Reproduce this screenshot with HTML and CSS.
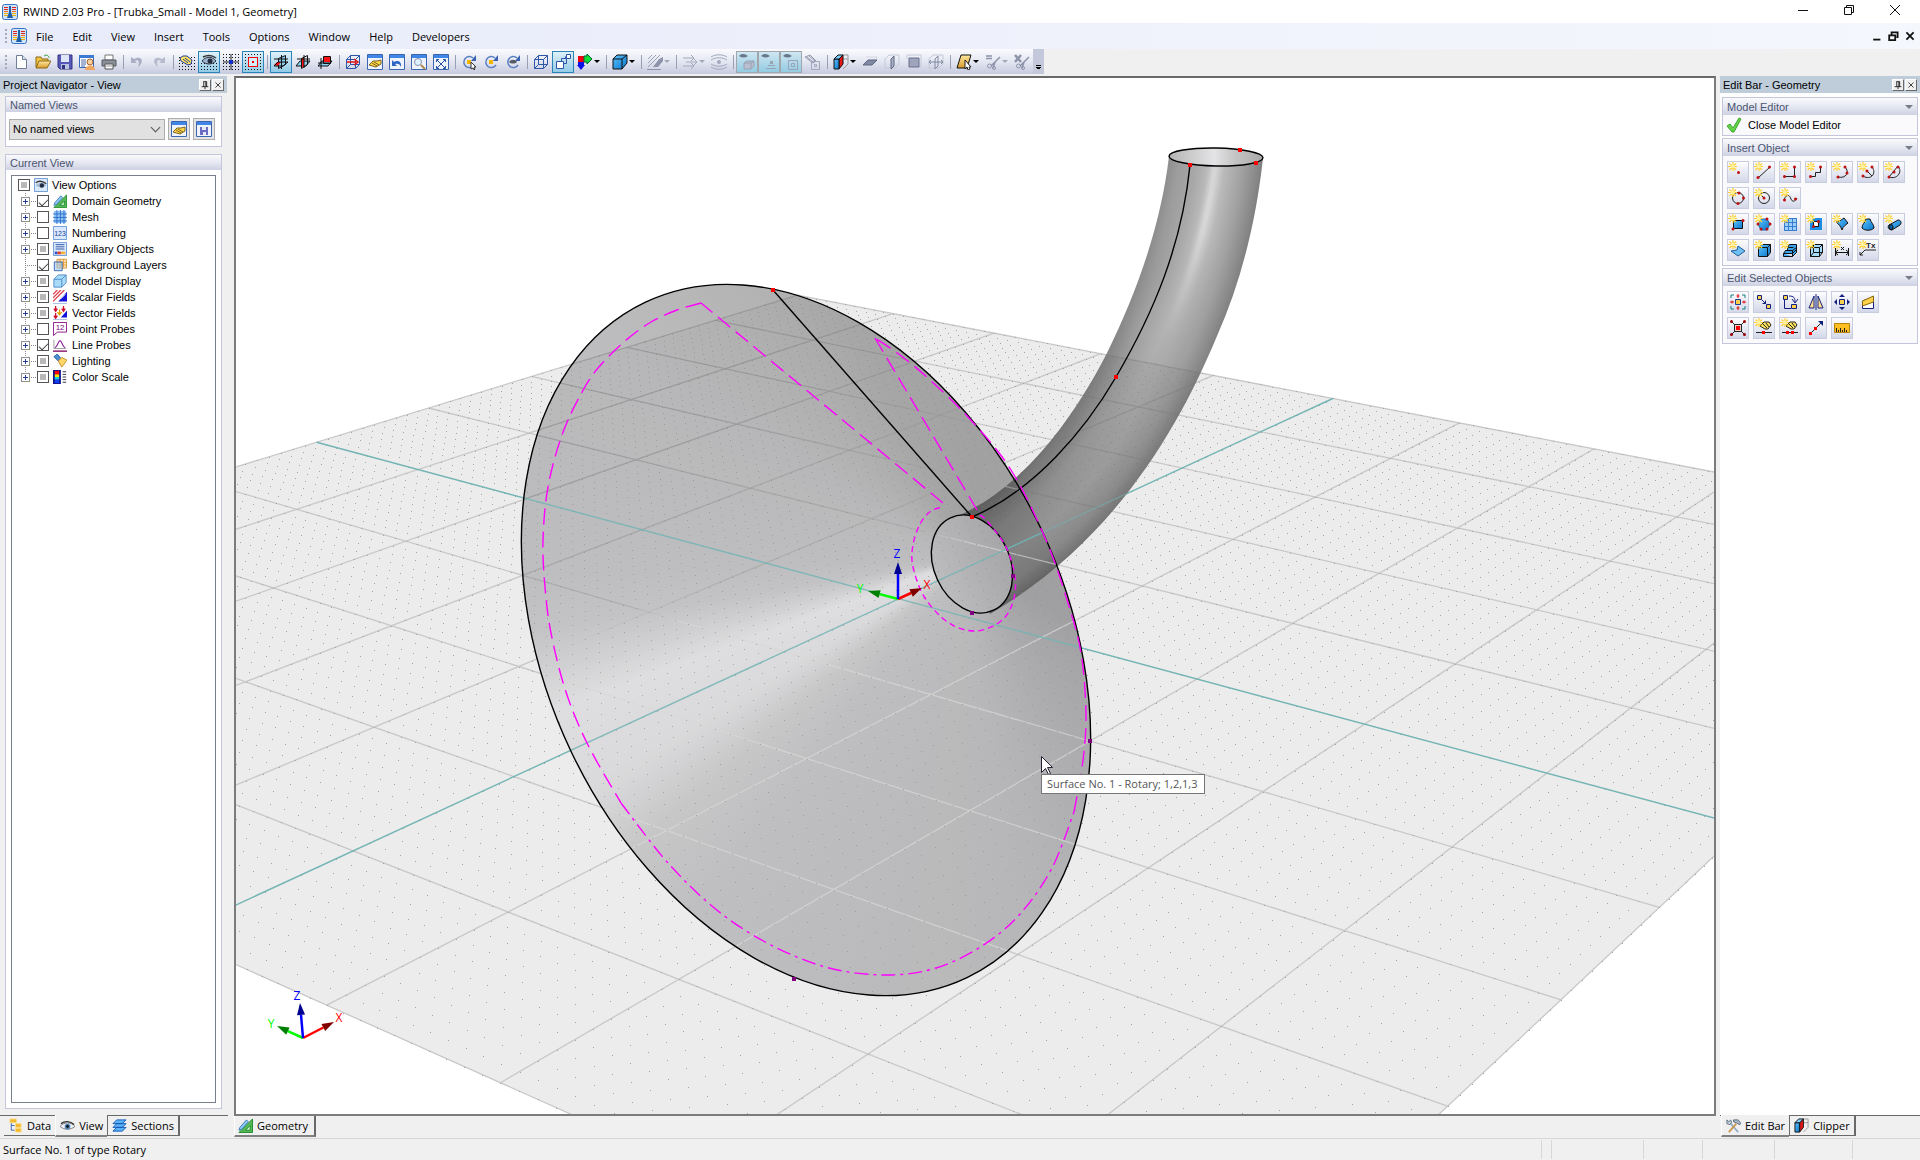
FILE: index.html
```
<!DOCTYPE html>
<html lang="en">
<head>
    <meta charset="UTF-8">
    <meta name="viewport" content="width=device-width, initial-scale=1.0">
    <title>RWIND 2.03 Pro - [Trubka_Small - Model 1, Geometry]</title>
    <link rel="stylesheet" href="styles.css">
</head>
<body>
    <!-- icon set -->
    <svg class="sprite" aria-hidden="true">
        <defs>
            <pattern id="dots" width="3" height="3" patternUnits="userSpaceOnUse"><rect width="1" height="1" fill="#111"/></pattern>
            <linearGradient id="blue" x1="0" y1="0" x2="1" y2="1"><stop offset="0" stop-color="#5cc3ff"/><stop offset="1" stop-color="#0a74c8"/></linearGradient>
            <linearGradient id="gold" x1="0" y1="0" x2="0" y2="1"><stop offset="0" stop-color="#ffe9a0"/><stop offset="1" stop-color="#d99a2b"/></linearGradient>
        </defs>
        <symbol id="i-app" viewBox="0 0 16 16"><rect x=".5" y=".5" width="15" height="15" rx="2" fill="#cfe4fb" stroke="#3573c4"/><path d="M2 3.500h4M2 5.500h4M10 3.500h4M10 5.500h4" stroke="#e02020"/><path d="M2 7.500h4M10 7.500h4" stroke="#f06a20"/><path d="M2 9.500h4M2 11.500h4M10 9.500h4M10 11.500h4" stroke="#f0b000"/><path d="M7 2h2v6l2 6H5l2-6z" fill="#1d5ea8"/></symbol>
        <symbol id="i-new" viewBox="0 0 16 16"><path d="M3.500 1.500h6l4 4v9h-10z" fill="#fff" stroke="#6f7f9a"/><path d="M9.500 1.500v4h4" fill="#dbe4f2" stroke="#6f7f9a"/></symbol>
        <symbol id="i-open" viewBox="0 0 16 16"><path d="M1 13V3h5l1 2h6v3" fill="#f5c343" stroke="#8b6914"/><path d="M1 14l3-7h12l-4 7z" fill="url(#gold)" stroke="#8b6914"/><path d="M9 2c3-2 5 0 5 2" fill="none" stroke="#3aa03a"/></symbol>
        <symbol id="i-save" viewBox="0 0 16 16"><path d="M1 1h14v14H3l-2-2z" fill="#5658b8" stroke="#32347e"/><path d="M4 1h8v7H4z" fill="#dfe6f8"/><path d="M4 10h8v5H4z" fill="#b9c2df"/><path d="M5 11h3v4H5z" fill="#32347e"/></symbol>
        <symbol id="i-props" viewBox="0 0 16 16"><path d="M.5 1.500h14v12H.5z" fill="#fff" stroke="#3c68b8"/><path d="M0 1h15v3H0z" fill="#3c7ad4"/><path d="M2 6h5M2 8h5M2 10h5M2 12h4" stroke="#4a66a8"/><circle cx="11" cy="8" r="3" fill="#f6cfa0" stroke="#a4622c"/><path d="M6 16c0-6 10-6 10 0z" fill="#f0a860"/></symbol>
        <symbol id="i-print" viewBox="0 0 16 16"><path d="M4 1h8v5H4z" fill="#fff" stroke="#777"/><path d="M1 6h14v6H1z" fill="#8a8f98" stroke="#555a63"/><path d="M4 10h8v5H4z" fill="#fff" stroke="#555"/><path d="M5 12h6" stroke="#999"/></symbol>
        <symbol id="i-undo" viewBox="0 0 16 16"><path d="M2 3v6h6L6 7c3-2 5 1 3 6 7-5 4-12-4-8z" fill="#a9aec2"/></symbol>
        <symbol id="i-redo" viewBox="0 0 16 16"><path d="M14 3v6H8l2-2C7 5 5 8 7 13 0 8 3 1 11 5z" fill="#b6bacb"/></symbol>
        <symbol id="i-grab" viewBox="0 0 16 16"><path d="M0 2h16v14H0z" fill="url(#dots)"/><path d="M1 4l3-2h4l5 4-1 4-3 1-7-4z" fill="#ffe45c" stroke="#223a9c"/><path d="M4 5l5 4M6 4l5 4" stroke="#223a9c"/></symbol>
        <symbol id="i-eyegrid" viewBox="0 0 16 16"><path d="M0 8h16v8H0z" fill="url(#dots)"/><path d="M1 7c4-5 10-5 14 0-4 4-10 4-14 0z" fill="#9fb4cf" stroke="#2b3340"/><circle cx="9" cy="7" r="2.500" fill="#222b3a"/><path d="M2 3c4-2 9-2 13 1" fill="none" stroke="#333" stroke-width="1.500"/></symbol>
        <symbol id="i-cross" viewBox="0 0 16 16"><path d="M0 0h16v16H0z" fill="url(#dots)"/><path d="M8 0v16M0 8h16" stroke="#222"/><circle cx="8" cy="8" r="2" fill="#0a2ae0"/></symbol>
        <symbol id="i-snap" viewBox="0 0 16 16"><path d="M0 0h16v16H0z" fill="url(#dots)"/><path d="M3.500 3.500h9v9h-9z" fill="#d5effa" stroke="#f00"/><path d="M7 7h2v2H7z" fill="#f00"/></symbol>
        <symbol id="i-plane1" viewBox="0 0 16 16"><path d="M5.500 4.500l7-3v9l-7 4z" fill="#8ed0f0" stroke="#111"/><path d="M1 11l3-3h4l-3 4z" fill="#f11"/><path d="M1 12l4-4h10M1 12h9l5-4M1 5h14M8.500 1v14" fill="none" stroke="#111"/></symbol>
        <symbol id="i-plane2" viewBox="0 0 16 16"><path d="M1 12l4-5h10l-4 5z" fill="#8ed0f0" stroke="#111"/><path d="M6 5l3-2v9l-3 2z" fill="#f11"/><path d="M6.500 4.500l6-3v9l-6 4zM2 5h13M9 1v13" fill="none" stroke="#111"/></symbol>
        <symbol id="i-plane3" viewBox="0 0 16 16"><path d="M1 12l4-5h10l-4 5z" fill="#8ed0f0" stroke="#111"/><path d="M7 2h6v6H7z" fill="#f11"/><path d="M6.500 2.500h7v7h-7zM4 4v11M1 9h13" fill="none" stroke="#111"/></symbol>
        <symbol id="i-wire" viewBox="0 0 16 16"><path d="M1.500 5.500h9v9h-9zM5.500 1.500h9v9h-9zM1.500 5.500l4-4M10.500 5.500l4-4M1.500 14.500l4-4M10.500 14.500l4-4" fill="none" stroke="#2d55a8"/></symbol>
        <symbol id="i-wirex" viewBox="0 0 16 16"><use href="#i-wire"/><path d="M2 8h9M9 5l4 3-4 3" fill="none" stroke="#e01010" stroke-width="1.500"/></symbol>
        <symbol id="i-win" viewBox="0 0 16 16"><path d="M.5.5h15v15H.5z" fill="#eef3fc" stroke="#3d66b0"/><path d="M1 1h14v3H1z" fill="#3f86e6"/></symbol>
        <symbol id="i-winhand" viewBox="0 0 16 16"><use href="#i-win"/><path d="M2 11l4-4 4 0 4-1v4l-5 3z" fill="#ffd84a" stroke="#7b6320"/><path d="M5 9l5 3M7 8l5 3" stroke="#7b6320"/></symbol>
        <symbol id="i-winback" viewBox="0 0 16 16"><use href="#i-win"/><path d="M3 6v6h5l-2-2c3-1 5 0 6 3 1-6-4-7-7-5z" fill="#2e66c4"/></symbol>
        <symbol id="i-winzoom" viewBox="0 0 16 16"><use href="#i-win"/><circle cx="7" cy="8" r="3.500" fill="#dff1ff" stroke="#8793a8"/><path d="M10 11l4 4" stroke="#b08a4a" stroke-width="2"/></symbol>
        <symbol id="i-winfit" viewBox="0 0 16 16"><use href="#i-win"/><path d="M4 6l8 8M12 6l-8 8M3.500 8V5.500H6M10 5.500h2.500V8M3.500 12v2.500H6M10 14.500h2.500V12" fill="none" stroke="#2a52a4"/></symbol>
        <symbol id="i-rot" viewBox="0 0 16 16"><path d="M12 4a5.500 5.500 0 1 0 1 7" fill="none" stroke="#5a7fc0" stroke-width="1.500"/><path d="M15 1v6H10z" fill="#3a62b0"/></symbol>
        <symbol id="i-rot1" viewBox="0 0 16 16"><use href="#i-rot"/><path d="M6 6h4v4H6z" fill="#f5b400"/><path d="M10 8v7l2-1 1 2 1-1-1-2h2z" fill="#fff" stroke="#333"/></symbol>
        <symbol id="i-rot2" viewBox="0 0 16 16"><use href="#i-rot"/><path d="M6 6h4v4H6z" fill="#f5b400"/></symbol>
        <symbol id="i-rot3" viewBox="0 0 16 16"><use href="#i-rot"/><path d="M4 8c2-3 6-3 8 0-2 2-6 2-8 0z" fill="#555c68"/></symbol>
        <symbol id="i-persp" viewBox="0 0 16 16"><path d="M1.500 7.500h7v7h-7z" fill="#fff" stroke="#2d55a8"/><path d="M6.500 7V4.500h5v5H9M10.500 4V2.500" fill="none" stroke="#2d55a8"/><path d="M11.500.5h4v4h-4z" fill="#fff" stroke="#2d55a8"/></symbol>
        <symbol id="i-view3" viewBox="0 0 16 16"><path d="M1 2h6v6H1z" fill="#f00010"/><path d="M7 2h3V0l5 5-5 5V8H7z" fill="#0ee03a" stroke="#063"/><path d="M1 8h6v3h1l-4 5-4-5h1z" fill="#0a10e8"/></symbol>
        <symbol id="i-cube" viewBox="0 0 16 16"><path d="M1 5l4-4h10v8l-5 6H1z" fill="url(#blue)" stroke="#111" stroke-linejoin="round"/><path d="M1 5h9v10M10 5l5-4" fill="none" stroke="#111"/></symbol>
        <symbol id="i-hatch" viewBox="0 0 16 16"><path d="M1 5l4-4M1 9l8-8M1 13L13 1" stroke="#9aa0b4"/><path d="M6 13l6-8 4-2v4l-5 6z" fill="#8d94aa"/><path d="M0 15.500h14" stroke="#8d94aa"/></symbol>
        <symbol id="i-arrows" viewBox="0 0 16 16"><path d="M1 4h10M1 12h10M4 8h10M9 1l3 3-3 3M12 5l3 3-3 3M9 9l3 3-3 3" fill="none" stroke="#a2a8bc"/></symbol>
        <symbol id="i-flow" viewBox="0 0 16 16"><path d="M0 3c5-3 11-3 16 0M0 6c5-3 11-3 16 0M0 13c5 3 11 3 16 0M0 10c5 3 11 3 16 0" fill="none" stroke="#a2a8bc"/><circle cx="8" cy="8" r="2" fill="#a2a8bc"/></symbol>
        <symbol id="i-ebox" viewBox="0 0 16 16"><path d="M0 2c3-3 6-2 9 0-3 2-6 2-9 0z" fill="#68788c"/><path d="M5 9l3-2h7v5l-3 3H5zM5 9h7v6M12 9l3-2" fill="#b9bfce" stroke="#9aa2b6"/></symbol>
        <symbol id="i-ebase" viewBox="0 0 16 16"><path d="M0 2c3-3 6-2 9 0-3 2-6 2-9 0z" fill="#68788c"/><path d="M9 7h3v3H9zM7 11h7v1H7zM5 14h10v1H5z" fill="#9aa2b6"/></symbol>
        <symbol id="i-esq" viewBox="0 0 16 16"><path d="M0 2c3-3 6-2 9 0-3 2-6 2-9 0z" fill="#68788c"/><path d="M5.500 6.500h9v9h-9zM8.500 9.500h3v3h-3z" fill="none" stroke="#9aa2b6"/></symbol>
        <symbol id="i-handsq" viewBox="0 0 16 16"><path d="M0 3l5-2 6 6-3 2zM2 3l6 5M4 2l6 5" fill="none" stroke="#9298ac"/><path d="M6.500 7.500h8v8h-8zM9.500 10.500h2v2h-2z" fill="none" stroke="#a2a8bc"/></symbol>
        <symbol id="i-clip" viewBox="0 0 16 16"><path d="M6 5l3-4h6v9l-5 5M10 5h5" fill="none" stroke="#999"/><path d="M6 5l4-4v9l-4 5z" fill="#e81616" stroke="#111"/><path d="M1 5h5v10H1z" fill="url(#blue)" stroke="#111"/><path d="M1 5l4-4h5L6 5z" fill="#7bd0ff" stroke="#111"/></symbol>
        <symbol id="i-cl1" viewBox="0 0 16 16"><path d="M4 3h11L11 14" fill="none" stroke="#d4d8e4"/><path d="M1 11l5-5h9l-5 5z" fill="#8188a2" stroke="#5f6682"/></symbol>
        <symbol id="i-cl2" viewBox="0 0 16 16"><path d="M1 5l4-4h10v9l-4 4H1z" fill="none" stroke="#c4c9d8"/><path d="M7 5l3-3v10l-3 3z" fill="#aab0c6" stroke="#5f6682"/></symbol>
        <symbol id="i-cl3" viewBox="0 0 16 16"><path d="M1 5V1h14v12h-3" fill="none" stroke="#c4c9d8"/><path d="M3 4h10v9H3z" fill="#9da4bc" stroke="#6a7190"/></symbol>
        <symbol id="i-cl4" viewBox="0 0 16 16"><path d="M1 5l4-4h10v9l-4 4H1z" fill="none" stroke="#c4c9d8"/><path d="M7 5l3-3v10l-3 3zM1 8h14M3 6L1 8l2 2M13 6l2 2-2 2" fill="none" stroke="#8188a2"/></symbol>
        <symbol id="i-slice" viewBox="0 0 16 16"><path d="M1 14L5 1h10l-4 13z" fill="url(#gold)" stroke="#111"/><path d="M9 6v9l2-2 1 3 2-1-1-2h2z" fill="#fff" stroke="#222"/></symbol>
        <symbol id="i-cut" viewBox="0 0 16 16"><path d="M1 2h6M1 4.500h6" stroke="#8d94aa" stroke-width="1.500"/><path d="M6 12l9-9M10 8l-2 6" stroke="#8d94aa" stroke-width="1.500"/><circle cx="4.500" cy="12" r="2" fill="none" stroke="#8d94aa"/><circle cx="9" cy="14" r="1.500" fill="none" stroke="#8d94aa"/></symbol>
        <symbol id="i-cutx" viewBox="0 0 16 16"><path d="M1 1l6 7M7 1L1 8" stroke="#8d94aa" stroke-width="2.500"/><path d="M6 12l9-9M10 8l-2 6" stroke="#8d94aa" stroke-width="1.500"/><circle cx="4.500" cy="12" r="2" fill="none" stroke="#8d94aa"/><circle cx="9" cy="14" r="1.500" fill="none" stroke="#8d94aa"/></symbol>
        <symbol id="i-viewsave" viewBox="0 0 16 16"><use href="#i-win"/><path d="M4 6h8v8H4z" fill="#6a6cc4"/><path d="M6 6h4v3H6zM7 11h3v3H7z" fill="#e4e9f8"/></symbol>

        <symbol id="t-eye" viewBox="0 0 16 16"><path d="M.5.5h15v15H.5z" fill="#d9e9fb" stroke="#5d8fd0"/><path d="M2 8.500c4-4 8-4 12 0-4 3-8 3-12 0z" fill="#a5b8d0"/><circle cx="9" cy="8.500" r="2.500" fill="#222c40"/><path d="M2 5.500c4-3 8-2 12 1" fill="none" stroke="#333" stroke-width="1.500"/></symbol>
        <symbol id="t-geo" viewBox="0 0 16 16"><path d="M1 15.500L15.500 1v14.500z" fill="#55b855" stroke="#1d8a2c"/><path d="M8 13l5-5v5z" fill="#d8f3d8" stroke="#1d8a2c"/><path d="M2 10l7-8 2 2-7 8-3 1z" fill="#8ccbf5" stroke="#3a78b4"/></symbol>
        <symbol id="t-mesh" viewBox="0 0 16 16"><path d="M1 1h14v14H1z" fill="#8cc4fa"/><path d="M4.500 0v16M8.500 0v16M12.500 0v16M0 4.500h16M0 8.500h16M0 12.500h16" stroke="#2e6cc4"/></symbol>
        <symbol id="t-aux" viewBox="0 0 16 16"><path d="M.5.5h15v15H.5z" fill="#d9e9fb" stroke="#5d8fd0"/><path d="M3 3h10M3 5.500h10M3 8h10" stroke="#24479c"/><path d="M2 11h3v3H2z" fill="#2a50d0"/><path d="M5 11h4v3H5z" fill="#e03a2c"/><path d="M9 11h5v3H9z" fill="#f4b23c"/></symbol>
        <symbol id="t-back" viewBox="0 0 16 16"><path d="M4.500 1.500h11v10h-11z" fill="#ffe3b0" stroke="#d09030"/><path d="M8 1v10M12 1v10M4 5h11M4 8h11" stroke="#e09a3c"/><path d="M1.500 4.500h9v10h-9z" fill="#9cc8f2" fill-opacity=".6" stroke="#2c5fb0"/></symbol>
        <symbol id="t-model" viewBox="0 0 16 16"><path d="M1 6l5-5h9v9l-5 5H1zM1 6h9v9M10 6l5-5" fill="#a8dcfa" stroke="#4a86c4"/></symbol>
        <symbol id="t-scalar" viewBox="0 0 16 16"><path d="M0 5l5-5M0 9l9-9M0 13L13 0" stroke="#e04050" stroke-width="1.500"/><path d="M6 13L16 2v11z" fill="#1414d8"/><path d="M9 10l5-5" stroke="#fff"/><path d="M0 15.500h16" stroke="#9cb6e0"/></symbol>
        <symbol id="t-vector" viewBox="0 0 16 16"><path d="M3 0v5M1 3l2 3 2-3M12 0v5M10 3l2 3 2-3M3 8v5M1 11l2 3 2-3" fill="none" stroke="#d01030" stroke-width="1.500"/><path d="M7.500 4v5M5 7l2.500 3L10 7" fill="none" stroke="#e0a000" stroke-width="1.500"/><path d="M9 13l7-8v8z" fill="#1414d8"/><path d="M0 15.500h16" stroke="#9cb6e0"/></symbol>
        <symbol id="t-line" viewBox="0 0 16 16"><path d="M1 2v10h14" fill="none" stroke="#999"/><path d="M2 11c3 0 4-8 6-8s3 8 6 8" fill="none" stroke="#8a2a9a" stroke-width="1.300"/><path d="M0 15h16" stroke="#800060" stroke-width="1.500"/></symbol>
        <symbol id="t-light" viewBox="0 0 16 16"><path d="M1 3l4-3 4 5-3 3z" fill="#4a8ed0" stroke="#2c5f9c"/><path d="M6 8l4-4 6 3-6 8z" fill="#ffd66a" stroke="#c08a20"/></symbol>
        <symbol id="t-color" viewBox="0 0 16 16"><path d="M0 0h9v16H0z" fill="#111188"/><path d="M2 1h5v4H2z" fill="#f00"/><path d="M2 5h5v3H2z" fill="#ffe000"/><path d="M2 8h5v3H2z" fill="#10d8d8"/><path d="M2 11h5v4H2z" fill="#1040f0"/><path d="M11 2h4M11 5h4M11 8h4M11 11h4M11 14h4" stroke="#223"/></symbol>
        <symbol id="t-data" viewBox="0 0 16 16"><path d="M3.500 5v8H7M3.500 8H7" fill="none" stroke="#3a62b0"/><path d="M2 1h7v4H2zM8 6h6v4H8zM8 11h6v4H8z" fill="#f4b82a" stroke="#f9dc8c"/></symbol>
        <symbol id="t-look" viewBox="0 0 16 16"><path d="M0 9c4-5 12-5 16 0-5 4-11 4-16 0z" fill="#eef2f8" stroke="#777"/><circle cx="8" cy="9" r="3" fill="#4c82b4"/><circle cx="8" cy="9" r="1.500" fill="#111"/><path d="M1 6c4-3 10-3 14 1" fill="none" stroke="#333" stroke-width="1.500"/></symbol>
        <symbol id="t-sect" viewBox="0 0 16 16"><path d="M1 14l4-4h10l-4 4zM1 10l4-4h10l-4 4zM1 6l4-4h10l-4 4z" fill="#5cb4f8" stroke="#1458b8"/></symbol>
        <symbol id="t-tools" viewBox="0 0 16 16"><path d="M4 5l9 10" stroke="#9ab0c8" stroke-width="2"/><path d="M11 6l-8 9" stroke="#c89850" stroke-width="2"/><path d="M8 2h5l3 4-2 1-3-2-3-1z" fill="#aab8c8" stroke="#5d6d80"/><path d="M1 2l2 2 2-2 1 3-2 2-3-1z" fill="#c4d0de" stroke="#5d6d80"/></symbol>
        <symbol id="i-check" viewBox="0 0 16 16"><path d="M1 9l3-2 3 4 6-10 2 1-7 13H6z" fill="#66d24a" stroke="#3ba52c"/></symbol>

        <symbol id="spark" viewBox="0 0 20 20"><path d="M5 0v9M0 4.500h9M1.500 1.500l6.500 6.500M8 1.500L1.500 8" stroke="#ffcf30" stroke-width="1.200"/><circle cx="4.800" cy="4.500" r="2" fill="#fff3a0"/></symbol>
        <symbol id="e-pt" viewBox="0 0 20 20"><use href="#spark"/><circle cx="10.500" cy="10.500" r="1.500" fill="#c01010"/></symbol>
        <symbol id="e-ln" viewBox="0 0 20 20"><path d="M4 16L16 5" stroke="#222"/><use href="#spark"/><g fill="#c01010"><circle cx="4" cy="15.500" r="1.500"/><circle cx="15.500" cy="5" r="1.500"/></g></symbol>
        <symbol id="e-pl" viewBox="0 0 20 20"><path d="M5 14.500h9.500V5" fill="none" stroke="#222"/><use href="#spark"/><g fill="#c01010"><circle cx="4.500" cy="14.500" r="1.500"/><circle cx="14.500" cy="14.500" r="1.500"/><circle cx="14.500" cy="5" r="1.500"/></g></symbol>
        <symbol id="e-st" viewBox="0 0 20 20"><path d="M4 14.500h5.500V10.500h5V5" fill="none" stroke="#222"/><use href="#spark"/><g fill="#c01010"><circle cx="4.500" cy="14.500" r="1.500"/><circle cx="14.500" cy="5" r="1.500"/></g></symbol>
        <symbol id="e-a1" viewBox="0 0 20 20"><path d="M13 5c5 5 1 12-7 10" fill="none" stroke="#222"/><use href="#spark"/><g fill="#c01010"><circle cx="13" cy="5" r="1.500"/><circle cx="15" cy="11" r="1.500"/><circle cx="6" cy="15" r="1.500"/></g></symbol>
        <symbol id="e-a2" viewBox="0 0 20 20"><path d="M14 5c5 6-1 14-9 9M9 9l5 5" fill="none" stroke="#222"/><use href="#spark"/><g fill="#c01010"><circle cx="14" cy="5" r="1.500"/><circle cx="9" cy="9" r="1.500"/><circle cx="5" cy="14" r="1.500"/></g></symbol>
        <symbol id="e-a3" viewBox="0 0 20 20"><path d="M14 4c5 6-1 14-9 11L14 4" fill="none" stroke="#222"/><use href="#spark"/><g fill="#c01010"><circle cx="14" cy="5" r="1.500"/><circle cx="10" cy="10" r="1.500"/><circle cx="5" cy="15" r="1.500"/></g></symbol>
        <symbol id="e-c1" viewBox="0 0 20 20"><circle cx="10" cy="10" r="5.500" fill="none" stroke="#222"/><use href="#spark"/><g fill="#c01010"><circle cx="10" cy="15.500" r="1.500"/><circle cx="15.500" cy="10" r="1.500"/><circle cx="11" cy="5" r="1.500"/></g></symbol>
        <symbol id="e-c2" viewBox="0 0 20 20"><circle cx="10" cy="10" r="5.500" fill="none" stroke="#222"/><path d="M7 7l3 3" stroke="#222"/><use href="#spark"/><circle cx="10" cy="10" r="1.500" fill="#c01010"/></symbol>
        <symbol id="e-sp" viewBox="0 0 20 20"><path d="M4 12c3-8 6-4 7-1s4 3 6-1" fill="none" stroke="#222"/><use href="#spark"/><g fill="#c01010"><circle cx="4.500" cy="12" r="1.500"/><circle cx="15.500" cy="11" r="1.500"/></g></symbol>
        <symbol id="e-rc" viewBox="0 0 20 20"><path d="M5.500 6.500h9v8h-9z" fill="url(#blue)" stroke="#111"/><use href="#spark"/><g fill="#c01010"><circle cx="15" cy="6.500" r="1.500"/><circle cx="5" cy="15" r="1.500"/></g></symbol>
        <symbol id="e-pg" viewBox="0 0 20 20"><path d="M7 5h6l3 5-3 6H7l-3-6z" fill="url(#blue)" stroke="#1569ac"/><use href="#spark"/><g fill="#c01010"><circle cx="13" cy="5" r="1.500"/><circle cx="16" cy="10" r="1.500"/><circle cx="13" cy="15" r="1.500"/><circle cx="7" cy="15" r="1.500"/><circle cx="4" cy="10" r="1.500"/></g></symbol>
        <symbol id="e-gr" viewBox="0 0 20 20"><path d="M4 4h12v12H4z" fill="#9bd0fa"/><path d="M4.500 4v12M8.500 4v12M12.500 4v12M16.500 4v13M4 4.500h12M4 8.500h12M4 12.500h12M4 16.500h12" stroke="#3a7cd0"/><use href="#spark"/></symbol>
        <symbol id="e-op" viewBox="0 0 20 20"><path d="M4 4h12v12H4z" fill="#1a8de4"/><path d="M7.500 7.500h5v5h-5z" fill="#fff" stroke="#111"/><use href="#spark"/><g fill="#c01010"><circle cx="12.500" cy="7.500" r="1.500"/><circle cx="7.500" cy="12.500" r="1.500"/></g></symbol>
        <symbol id="e-q1" viewBox="0 0 20 20"><path d="M4 8c4 0 6-3 8-4l4 5c-2 2-5 3-6 7-1-3-3-6-6-8z" fill="url(#blue)" stroke="#111"/><use href="#spark"/></symbol>
        <symbol id="e-ro" viewBox="0 0 20 20"><path d="M8 5h4c1 4 4 5 4 9-3 3-9 3-12 0 0-4 3-5 4-9z" fill="url(#blue)" stroke="#111"/><use href="#spark"/></symbol>
        <symbol id="e-pp" viewBox="0 0 20 20"><path d="M5 11l9-5c3 0 4 3 2 5l-8 5c-3 0-5-3-3-5z" fill="url(#blue)" stroke="#111"/><ellipse cx="7" cy="13" rx="2" ry="2.500" fill="#0a5a9c" stroke="#111"/><use href="#spark"/></symbol>
        <symbol id="e-su" viewBox="0 0 20 20"><path d="M3 11l6-1 1-4 7 5-7 5z" fill="#6fc0f5" stroke="#1f5f94"/><use href="#spark"/></symbol>
        <symbol id="e-bx" viewBox="0 0 20 20"><path d="M4.500 7.500l3-3h9v8l-3 4h-9zM4.500 7.500h9v9M13.500 7.500l3-3" fill="url(#blue)" stroke="#111"/><use href="#spark"/></symbol>
        <symbol id="e-ex" viewBox="0 0 20 20"><path d="M3.500 13.500h9v3h-9zM12.500 16.500l4-4v-8h-7l-2 3v3l-2 0-2 3" fill="#3aa4ee" stroke="#111"/><path d="M5.500 10.500h7M7.500 7.500h6M12.500 13.500l4-4M12.500 10.500l4-3M12.500 13v-3" fill="none" stroke="#111"/><use href="#spark"/></symbol>
        <symbol id="e-bh" viewBox="0 0 20 20"><path d="M4.500 7.500l3-3h9v8l-3 4h-9z" fill="#a8dcfc" stroke="#111"/><path d="M4.500 7.500h9v9M13.500 7.500l3-3M7.500 4.500v8h9M7.500 12.500l-3 4" fill="none" stroke="#111"/><use href="#spark"/></symbol>
        <symbol id="e-dm" viewBox="0 0 20 20"><path d="M3.500 8v8M16.500 8v8M3 12.500h14M6 10l-3 2.500 3 2.500M14 10l3 2.500-3 2.500" fill="none" stroke="#111"/><path d="M9 7l3 3M12 7l-3 3" stroke="#111"/><use href="#spark"/></symbol>
        <symbol id="e-sel" viewBox="0 0 20 20"><path d="M7.500 7.500h5v5h-5z" fill="#ffd04a" stroke="#223a9c"/><path d="M10 2v4M10 14v4M2 10h4M14 10h4M8.500 4h3M8.500 16h3M4 8.500v3M16 8.500v3" stroke="#e01010"/><path d="M3 6V3h3M14 3h3v3M3 14v3h3M14 17h3v-3" fill="none" stroke="#128080"/></symbol>
        <symbol id="e-cp" viewBox="0 0 20 20"><path d="M3.500 3.500h4v4h-4zM12.500 12.500h4v4h-4z" fill="#ffd04a" stroke="#14207c"/><path d="M8 8l4 4M8.500 11.500h3v-3" fill="none" stroke="#14207c"/></symbol>
        <symbol id="e-rt" viewBox="0 0 20 20"><path d="M3.500 3.500h4v4h-4zM11.500 12.500h5v4h-5z" fill="#ffd04a" stroke="#14207c"/><path d="M4.500 8v8.500H11M9 4c5 0 6 2 6 6M12 7l3 4 3-4" fill="none" stroke="#14207c"/></symbol>
        <symbol id="e-mr" viewBox="0 0 20 20"><path d="M8 4v12H3zM12 4v12h5z" fill="#ffe08a" stroke="#14207c"/><path d="M10 2v16" stroke="#14207c"/></symbol>
        <symbol id="e-mv" viewBox="0 0 20 20"><path d="M7.500 7.500h5v5h-5z" fill="#ffd04a" stroke="#14207c"/><path d="M10 2l3 3H7zM10 18l3-3H7zM2 10l3-3v6zM18 10l-3-3v6z" fill="#14207c"/></symbol>
        <symbol id="e-sh" viewBox="0 0 20 20"><path d="M4.500 16.500V9l11-4v11.500z" fill="#fff" stroke="#14207c"/><path d="M4.500 14V9l11-5v6z" fill="#ffd04a" stroke="#8a6a10"/></symbol>
        <symbol id="e-jn" viewBox="0 0 20 20"><path d="M3 3l14 14M17 3L3 17" stroke="#222"/><path d="M6.500 6.500h7v7h-7z" fill="#f6d0c8" stroke="#222"/><path d="M8 8h4v4H8z" fill="#f00"/><g fill="#900"><circle cx="3.500" cy="3.500" r="1.500"/><circle cx="16.500" cy="3.500" r="1.500"/><circle cx="3.500" cy="16.500" r="1.500"/><circle cx="16.500" cy="16.500" r="1.500"/></g></symbol>
        <symbol id="e-d1" viewBox="0 0 20 20"><path d="M2 14.500h16" stroke="#222"/><path d="M8 13h3v3H8z" fill="#f00"/><path d="M6 8l4-4h5l2 3-3 4h-3z" fill="#ffe45c" stroke="#222"/><path d="M9 6l4 4M12 5l3 4" stroke="#222"/><use href="#spark"/></symbol>
        <symbol id="e-d2" viewBox="0 0 20 20"><path d="M2 14.500h16" stroke="#222"/><path d="M6 13h3v3H6zM11 13h3v3h-3z" fill="#f00"/><path d="M6 8l4-4h5l2 3-3 4h-3z" fill="#ffe45c" stroke="#222"/><path d="M9 6l4 4M12 5l3 4" stroke="#222"/><use href="#spark"/></symbol>
        <symbol id="e-xt" viewBox="0 0 20 20"><path d="M4 16L15 5" stroke="#222"/><path d="M3 14h3v3H3zM8 9h3v3H8z" fill="#f00"/><path d="M12 3h5v5z" fill="#14207c"/></symbol>
        <symbol id="e-ms" viewBox="0 0 20 20"><path d="M2.500 5.500h15v9h-15z" fill="#ffbe20" stroke="#b88410"/><path d="M4.500 14v-4M6.500 14v-2M8.500 14v-4M10.500 14v-2M12.500 14v-4M14.500 14v-2" stroke="#222"/></symbol>
        <symbol id="i-pin" viewBox="0 0 12 12"><path d="M2 8h8M4 2h4M4.500 2v6M7 2v6M8 2v6M6 8v3" stroke="#111" fill="none"/></symbol>
        <symbol id="i-x" viewBox="0 0 12 12"><path d="M3 3l6 6M9 3L3 9" stroke="#222"/></symbol>
    </svg>

    <header class="titlebar">
        <svg class="icon"><use href="#i-app"/></svg>
        <h1>RWIND 2.03 Pro - [Trubka_Small - Model 1, Geometry]</h1>
        <div class="window-buttons">
            <button aria-label="Minimize"><svg viewBox="0 0 12 12"><path d="M1 6.500h10"/></svg></button>
            <button aria-label="Restore"><svg viewBox="0 0 12 12"><path d="M1.500 3.500h7v7h-7zM3.500 3V1.500h7v7H9"/></svg></button>
            <button aria-label="Close"><svg viewBox="0 0 12 12"><path d="M1 1l10 10M11 1L1 11"/></svg></button>
        </div>
    </header>

    <nav class="menubar">
        <span class="grip"></span>
        <svg class="icon"><use href="#i-app"/></svg>
        <button>File</button>
        <button>Edit</button>
        <button>View</button>
        <button>Insert</button>
        <button>Tools</button>
        <button>Options</button>
        <button>Window</button>
        <button>Help</button>
        <button>Developers</button>
        <div class="child-buttons">
            <button aria-label="Minimize document"><svg viewBox="0 0 10 10"><path d="M1 8h6"/></svg></button>
            <button aria-label="Restore document"><svg viewBox="0 0 10 10"><path d="M1 4.500h5v4H1zM3 4V2h5v4H7"/></svg></button>
            <button aria-label="Close document"><svg viewBox="0 0 10 10"><path d="M2 2l6 6M8 2L2 8"/></svg></button>
        </div>
    </nav>

    <div class="toolbar" role="toolbar">
        <span class="grip"></span>
        <button class="tool" aria-label="New"><svg><use href="#i-new"/></svg></button>
        <button class="tool" aria-label="Open"><svg><use href="#i-open"/></svg></button>
        <button class="tool" aria-label="Save"><svg><use href="#i-save"/></svg></button>
        <button class="tool" aria-label="Properties"><svg><use href="#i-props"/></svg></button>
        <button class="tool" aria-label="Print"><svg><use href="#i-print"/></svg></button>
        <span class="sep"></span>
        <button class="tool" aria-label="Undo"><svg><use href="#i-undo"/></svg></button>
        <button class="tool" aria-label="Redo"><svg><use href="#i-redo"/></svg></button>
        <span class="sep"></span>
        <button class="tool" aria-label="Edit work plane"><svg><use href="#i-grab"/></svg></button>
        <button class="tool active" aria-label="Show grid"><svg><use href="#i-eyegrid"/></svg></button>
        <button class="tool" aria-label="Ortho"><svg><use href="#i-cross"/></svg></button>
        <button class="tool active" aria-label="Snap"><svg><use href="#i-snap"/></svg></button>
        <span class="sep"></span>
        <button class="tool active" aria-label="Plane XY"><svg><use href="#i-plane1"/></svg></button>
        <button class="tool" aria-label="Plane YZ"><svg><use href="#i-plane2"/></svg></button>
        <button class="tool" aria-label="Plane XZ"><svg><use href="#i-plane3"/></svg></button>
        <span class="sep"></span>
        <button class="tool" aria-label="View direction"><svg><use href="#i-wirex"/></svg></button>
        <button class="tool" aria-label="Pan"><svg><use href="#i-winhand"/></svg></button>
        <button class="tool" aria-label="Previous view"><svg><use href="#i-winback"/></svg></button>
        <button class="tool" aria-label="Zoom window"><svg><use href="#i-winzoom"/></svg></button>
        <button class="tool" aria-label="Show all"><svg><use href="#i-winfit"/></svg></button>
        <span class="sep"></span>
        <button class="tool" aria-label="Rotate about point"><svg><use href="#i-rot1"/></svg></button>
        <button class="tool" aria-label="Rotate about center"><svg><use href="#i-rot2"/></svg></button>
        <button class="tool" aria-label="Rotate view"><svg><use href="#i-rot3"/></svg></button>
        <span class="sep"></span>
        <button class="tool" aria-label="Wireframe"><svg><use href="#i-wire"/></svg></button>
        <button class="tool active" aria-label="Perspective"><svg><use href="#i-persp"/></svg></button>
        <button class="tool drop" aria-label="Views"><svg><use href="#i-view3"/></svg></button>
        <span class="sep"></span>
        <button class="tool drop" aria-label="Display style"><svg><use href="#i-cube"/></svg></button>
        <span class="sep"></span>
        <button class="tool drop off" aria-label="Scalar fields"><svg><use href="#i-hatch"/></svg></button>
        <span class="sep"></span>
        <button class="tool drop off" aria-label="Vector fields"><svg><use href="#i-arrows"/></svg></button>
        <button class="tool" aria-label="Streamlines"><svg><use href="#i-flow"/></svg></button>
        <span class="sep"></span>
        <button class="tool active-off" aria-label="Show model"><svg><use href="#i-ebox"/></svg></button>
        <button class="tool active-off" aria-label="Show terrain"><svg><use href="#i-ebase"/></svg></button>
        <button class="tool active-off" aria-label="Show domain"><svg><use href="#i-esq"/></svg></button>
        <button class="tool" aria-label="Select domain"><svg><use href="#i-handsq"/></svg></button>
        <span class="sep"></span>
        <button class="tool drop" aria-label="Clipper"><svg><use href="#i-clip"/></svg></button>
        <button class="tool" aria-label="Clip horizontal"><svg><use href="#i-cl1"/></svg></button>
        <button class="tool" aria-label="Clip vertical"><svg><use href="#i-cl2"/></svg></button>
        <button class="tool" aria-label="Clip front"><svg><use href="#i-cl3"/></svg></button>
        <button class="tool" aria-label="Flip clipper"><svg><use href="#i-cl4"/></svg></button>
        <span class="sep"></span>
        <button class="tool drop" aria-label="New section"><svg><use href="#i-slice"/></svg></button>
        <button class="tool drop off" aria-label="Edit section"><svg><use href="#i-cut"/></svg></button>
        <button class="tool" aria-label="Delete section"><svg><use href="#i-cutx"/></svg></button>
        <button class="overflow" aria-label="More buttons"></button>
    </div>

    <div class="workspace">
        <aside class="navigator">
            <div class="pane-title">
                <h2>Project Navigator - View</h2>
                <button aria-label="Pin"><svg><use href="#i-pin"/></svg></button>
                <button aria-label="Close pane"><svg><use href="#i-x"/></svg></button>
            </div>
            <section class="box">
                <h3><label for="views">Named Views</label></h3>
                <div class="named-views">
                    <div class="select">
                        <select id="views"><option>No named views</option></select>
                    </div>
                    <button aria-label="Load view"><svg class="icon"><use href="#i-winhand"/></svg></button>
                    <button aria-label="Save view"><svg class="icon"><use href="#i-viewsave"/></svg></button>
                </div>
            </section>
            <section class="box grow">
                <h3>Current View</h3>
                <ul class="tree">
                    <li class="root"><input type="checkbox" class="part" id="c0"><svg class="icon"><use href="#t-eye"/></svg><label for="c0">View Options</label></li>
                    <li><span class="branch"><button aria-label="Expand"></button></span><input type="checkbox" id="c1" checked><svg class="icon"><use href="#t-geo"/></svg><label for="c1">Domain Geometry</label></li>
                    <li><span class="branch"><button aria-label="Expand"></button></span><input type="checkbox" id="c2"><svg class="icon"><use href="#t-mesh"/></svg><label for="c2">Mesh</label></li>
                    <li><span class="branch"><button aria-label="Expand"></button></span><input type="checkbox" id="c3"><svg class="icon" viewBox="0 0 16 16"><path d="M.5.5h15v15H.5z" fill="#d9e9fb" stroke="#5d8fd0"/><text x="8" y="11" class="icon-num">123</text></svg><label for="c3">Numbering</label></li>
                    <li><span class="branch"><button aria-label="Expand"></button></span><input type="checkbox" class="part" id="c4"><svg class="icon"><use href="#t-aux"/></svg><label for="c4">Auxiliary Objects</label></li>
                    <li><span class="branch"></span><input type="checkbox" id="c5" checked><svg class="icon"><use href="#t-back"/></svg><label for="c5">Background Layers</label></li>
                    <li><span class="branch"><button aria-label="Expand"></button></span><input type="checkbox" class="part" id="c6"><svg class="icon"><use href="#t-model"/></svg><label for="c6">Model Display</label></li>
                    <li><span class="branch"><button aria-label="Expand"></button></span><input type="checkbox" class="part" id="c7"><svg class="icon"><use href="#t-scalar"/></svg><label for="c7">Scalar Fields</label></li>
                    <li><span class="branch"><button aria-label="Expand"></button></span><input type="checkbox" class="part" id="c8"><svg class="icon"><use href="#t-vector"/></svg><label for="c8">Vector Fields</label></li>
                    <li><span class="branch"><button aria-label="Expand"></button></span><input type="checkbox" id="c9"><svg class="icon" viewBox="0 0 16 16"><path d="M.5.5h15v11H5l-4.500 4z" fill="#fff" stroke="#800080"/><text x="8" y="9" class="icon-probe">12</text></svg><label for="c9">Point Probes</label></li>
                    <li><span class="branch"><button aria-label="Expand"></button></span><input type="checkbox" id="c10" checked><svg class="icon"><use href="#t-line"/></svg><label for="c10">Line Probes</label></li>
                    <li><span class="branch"><button aria-label="Expand"></button></span><input type="checkbox" class="part" id="c11"><svg class="icon"><use href="#t-light"/></svg><label for="c11">Lighting</label></li>
                    <li><span class="branch last"><button aria-label="Expand"></button></span><input type="checkbox" class="part" id="c12"><svg class="icon"><use href="#t-color"/></svg><label for="c12">Color Scale</label></li>
                </ul>
            </section>
            <div class="tabs">
                <button><svg class="icon"><use href="#t-data"/></svg>Data</button>
                <button class="current"><svg class="icon"><use href="#t-look"/></svg>View</button>
                <button class="framed"><svg class="icon"><use href="#t-sect"/></svg>Sections</button>
            </div>
        </aside>

        <main class="document">
            <div class="viewport">
                <svg id="scene" class="scene" viewBox="236 78 1478 1036" preserveAspectRatio="xMidYMid slice">
                    <defs>
                        <clipPath id="coneClip"><ellipse cx="806" cy="640" rx="374" ry="260" transform="rotate(64.5 806 640)"/></clipPath>
                        <clipPath id="tubeClip"><path id="tubeShape"/></clipPath>
                        <linearGradient id="gridOnCone" gradientUnits="userSpaceOnUse" x1="700" y1="400" x2="800" y2="760">
                            <stop offset="0" stop-color="#8f8f8f"/><stop offset=".48" stop-color="#a6a6a6"/><stop offset=".56" stop-color="#d6d6d4"/><stop offset="1" stop-color="#d8d8d6"/>
                        </linearGradient>
                        <linearGradient id="mouth" x1="0" y1="0" x2="0" y2="1"><stop offset="0" stop-color="#a6a6a8"/><stop offset="1" stop-color="#bcbcbe"/></linearGradient>
                        <linearGradient id="rim"><stop offset="0" stop-color="#b4b4b4"/><stop offset=".48" stop-color="#e4e4e6"/><stop offset=".7" stop-color="#c4c4c4"/><stop offset="1" stop-color="#aaa"/></linearGradient>
                    </defs>
                    <path id="ground" class="ground"/>
                    <path id="gridLines" class="grid-lines"/>
                    <path id="gridDots" class="grid-dots"/>
                    <path class="grid-axis axes"/>

                    <g clip-path="url(#coneClip)">
                        <foreignObject x="520" y="284" width="572" height="714"><div class="cone"></div></foreignObject>
                        <path class="ground-shade"/>
                    </g>
                    <g id="tube"></g>
                    <g clip-path="url(#tubeClip)">
                        <path class="ground-shade"/>
                        <path class="lines-copy on-tube"/>
                        <path class="dots-copy on-tube"/>
                        <path class="grid-axis axes faded"/>
                        <ellipse class="tube-shadow" cx="806" cy="640" rx="374" ry="260" transform="rotate(64.5 806 640)"/>
                    </g>
                    <ellipse cx="972" cy="564" rx="51" ry="38" transform="rotate(65 972 564)" fill="url(#mouth)"/>
                    <g clip-path="url(#coneClip)">
                        <path class="lines-copy on-cone"/>
                        <path class="dots-copy on-cone"/>
                        <path class="grid-axis axes cone-axes"/>
                    </g>

                    <ellipse class="edge" cx="806" cy="640" rx="374" ry="260" transform="rotate(64.5 806 640)"/>
                    <ellipse class="edge" cx="972" cy="564" rx="51" ry="38" transform="rotate(65 972 564)"/>
                    <ellipse class="edge rim" cx="1216" cy="157" rx="47" ry="9" transform="rotate(1 1216 157)"/>
                    <path class="edge" d="M773 290L972 517"/>
                    <path class="edge" d="M1190 165C1182 245 1154 312 1116 377C1085 430 1035 490 972 517"/>
                    <g id="dashes" class="dashes"></g>
                    <g id="nodes"></g>
                    <g id="triads"></g>
                </svg>
                <svg class="cursor" viewBox="0 0 12 20"><path d="M.5.500v16l4-4 3 6 2-1-3-6h5z" fill="#fff" stroke="#223"/></svg>
                <div class="tooltip" role="tooltip">Surface No. 1 - Rotary; 1,2,1,3</div>
            </div>
            <div class="tabs doc-tabs">
                <button class="current"><svg class="icon"><use href="#t-geo"/></svg>Geometry</button>
            </div>
        </main>

        <aside class="editbar">
            <div class="pane-title">
                <h2>Edit Bar - Geometry</h2>
                <button aria-label="Pin"><svg><use href="#i-pin"/></svg></button>
                <button aria-label="Close pane"><svg><use href="#i-x"/></svg></button>
            </div>
            <div class="edit-boxes">
                <section class="box">
                    <h3>Model Editor<i class="fold"></i></h3>
                    <button class="close-editor"><svg class="icon"><use href="#i-check"/></svg>Close Model Editor</button>
                </section>
                <section class="box">
                    <h3>Insert Object<i class="fold"></i></h3>
                    <div class="palette">
                        <button aria-label="Node"><svg><use href="#e-pt"/></svg></button>
                        <button aria-label="Line"><svg><use href="#e-ln"/></svg></button>
                        <button aria-label="Polyline"><svg><use href="#e-pl"/></svg></button>
                        <button aria-label="Stepped line"><svg><use href="#e-st"/></svg></button>
                        <button aria-label="Arc by points"><svg><use href="#e-a1"/></svg></button>
                        <button aria-label="Arc by center"><svg><use href="#e-a2"/></svg></button>
                        <button aria-label="Arc by chord"><svg><use href="#e-a3"/></svg></button>
                    </div>
                    <div class="palette">
                        <button aria-label="Circle by points"><svg><use href="#e-c1"/></svg></button>
                        <button aria-label="Circle by center"><svg><use href="#e-c2"/></svg></button>
                        <button aria-label="Spline"><svg><use href="#e-sp"/></svg></button>
                    </div>
                    <div class="palette">
                        <button aria-label="Rectangle"><svg><use href="#e-rc"/></svg></button>
                        <button aria-label="Polygon"><svg><use href="#e-pg"/></svg></button>
                        <button aria-label="Mesh surface"><svg><use href="#e-gr"/></svg></button>
                        <button aria-label="Opening"><svg><use href="#e-op"/></svg></button>
                        <button aria-label="Quadrangle"><svg><use href="#e-q1"/></svg></button>
                        <button aria-label="Rotary surface"><svg><use href="#e-ro"/></svg></button>
                        <button aria-label="Pipe"><svg><use href="#e-pp"/></svg></button>
                    </div>
                    <div class="palette">
                        <button aria-label="Free surface"><svg><use href="#e-su"/></svg></button>
                        <button aria-label="Box"><svg><use href="#e-bx"/></svg></button>
                        <button aria-label="Extrusion"><svg><use href="#e-ex"/></svg></button>
                        <button aria-label="Hollow box"><svg><use href="#e-bh"/></svg></button>
                        <button aria-label="Dimension"><svg><use href="#e-dm"/></svg></button>
                        <button aria-label="Comment"><svg viewBox="0 0 20 20"><path d="M2 15l5-5h11M2 12v3h3" fill="none" stroke="#222"/><text x="8" y="8" class="icon-tx">Tx</text><use href="#spark"/></svg></button>
                    </div>
                </section>
                <section class="box">
                    <h3>Edit Selected Objects<i class="fold"></i></h3>
                    <div class="palette">
                        <button aria-label="Select"><svg><use href="#e-sel"/></svg></button>
                        <button aria-label="Copy"><svg><use href="#e-cp"/></svg></button>
                        <button aria-label="Rotate"><svg><use href="#e-rt"/></svg></button>
                        <button aria-label="Mirror"><svg><use href="#e-mr"/></svg></button>
                        <button aria-label="Scale"><svg><use href="#e-mv"/></svg></button>
                        <button aria-label="Shear"><svg><use href="#e-sh"/></svg></button>
                    </div>
                    <div class="palette">
                        <button aria-label="Join"><svg><use href="#e-jn"/></svg></button>
                        <button aria-label="Divide by node"><svg><use href="#e-d1"/></svg></button>
                        <button aria-label="Divide by nodes"><svg><use href="#e-d2"/></svg></button>
                        <button aria-label="Extend line"><svg><use href="#e-xt"/></svg></button>
                        <button aria-label="Measure"><svg><use href="#e-ms"/></svg></button>
                    </div>
                </section>
            </div>
            <div class="tabs">
                <button class="current"><svg class="icon"><use href="#t-tools"/></svg>Edit Bar</button>
                <button class="framed"><svg class="icon"><use href="#i-clip"/></svg>Clipper</button>
            </div>
        </aside>
    </div>

    <footer class="statusbar">
        <span class="message">Surface No. 1 of type Rotary</span>
        <span class="cell w10"></span>
        <span class="cell w92"></span>
        <span class="cell w59"></span>
        <span class="cell w72"></span>
        <span class="cell w78"></span>
        <span class="cell w68"></span>
    </footer>

    <script src="scene.js"></script>
</body>
</html>
```
FILE: styles.css
```
* {
    margin: 0;
    padding: 0;
    box-sizing: border-box;
}

body {
    font-family: 'Open Sans', 'Noto Sans', sans-serif;
    font-size: 11px;
    color: #000;
    background: #f0f0f0;
    height: 100vh;
    display: flex;
    flex-direction: column;
    overflow: hidden;
}

button,
select,
input {
    font: inherit;
    color: inherit;
    background: none;
    border: none;
}

h1, h2, h3 {
    font-size: 11px;
    font-weight: normal;
}

.sprite {
    position: absolute;
    width: 0;
    height: 0;
}

.icon {
    width: 16px;
    height: 16px;
    flex: none;
}

.icon-num {
    font: 8px 'Liberation Sans', sans-serif;
    fill: #1d3f94;
    text-anchor: middle;
}

.icon-probe {
    font: 9px 'Liberation Sans', sans-serif;
    fill: #800080;
    text-anchor: middle;
}

.icon-tx {
    font: bold 8px 'Liberation Sans', sans-serif;
    fill: #222;
}

/* title and menu */
.titlebar {
    height: 23px;
    flex: none;
    display: flex;
    align-items: center;
    gap: 5px;
    padding-left: 2px;
    background: #fff;
}

.titlebar h1 {
    flex: 1;
}

.window-buttons {
    display: flex;
    padding-right: 2px;
}

.window-buttons button {
    width: 46px;
    height: 20px;
}

.window-buttons svg {
    width: 12px;
    height: 12px;
    fill: none;
    stroke: #111;
}

.menubar {
    height: 26px;
    flex: none;
    display: flex;
    align-items: center;
    padding-left: 5px;
    background: linear-gradient(90deg, #e8ebfa, #f4f7fc);
}

.menubar .icon {
    margin: 0 0 0 3px;
}

.menubar > button {
    padding: 0 9px;
    margin-right: 1px;
}

.grip {
    width: 3px;
    height: 14px;
    background: repeating-linear-gradient(#a5a8b8 0 2px, transparent 2px 4px) no-repeat 0 0 / 2px 100%;
}

.child-buttons {
    margin-left: auto;
    display: flex;
    gap: 4px;
    padding-right: 4px;
}

.child-buttons svg {
    display: block;
    width: 12px;
    height: 12px;
    fill: none;
    stroke: #111;
    stroke-width: 1.5;
}

/* toolbar */
.toolbar {
    height: 25px;
    flex: none;
    display: flex;
    align-items: center;
    align-self: flex-start;
    padding-left: 5px;
    margin-bottom: 2px;
    background: linear-gradient(#fbfbfe, #e4e7f2 50%, #c6cade);
}

.toolbar .grip {
    margin-right: 2px;
}

.tool {
    width: 22px;
    height: 22px;
    display: flex;
    align-items: center;
    justify-content: center;
    border: 1px solid transparent;
}

.tool svg {
    width: 16px;
    height: 16px;
}

.tool.active {
    border-color: #2c85b8;
    background: linear-gradient(#dff1fa, #93cbe6);
}

.tool.active-off {
    border-color: #a0a6ac;
    background: linear-gradient(#cfe7f2, #93cbe2);
}

.tool.drop {
    width: 29px;
    justify-content: flex-start;
    padding-left: 2px;
}

.tool.drop::after {
    content: '';
    border: 3px solid transparent;
    border-top-color: #000;
    border-bottom: none;
    margin-left: 1px;
}

.tool.drop.off::after {
    border-top-color: #a2a8bc;
}

.sep {
    width: 6px;
    height: 14px;
    background: linear-gradient(#9a9eb4, #9a9eb4) no-repeat 3px 0 / 1px 100%;
}

.overflow {
    width: 11px;
    height: 25px;
    background: #c3c8da;
    display: flex;
    justify-content: center;
    align-items: flex-end;
    padding-bottom: 4px;
}

.overflow::after {
    content: '';
    width: 7px;
    height: 5px;
    background: linear-gradient(#000, #000) no-repeat 1px 0 / 5px 1px,
        linear-gradient(#000, #000) no-repeat 1px 2px / 5px 1px,
        linear-gradient(#000, #000) no-repeat 2px 3px / 3px 1px;
}

/* side panes */
.workspace {
    flex: 1;
    min-height: 0;
    display: flex;
}

.navigator,
.editbar {
    font-family: 'Liberation Sans', sans-serif;
    display: flex;
    flex-direction: column;
}

.navigator {
    width: 228px;
}

.pane-title {
    height: 17px;
    flex: none;
    display: flex;
    align-items: center;
    gap: 1px;
    padding: 0 3px 0 3px;
    background: #bfcddb;
}

.navigator .pane-title {
    margin-right: 1px;
}

.pane-title h2 {
    flex: 1;
}

.pane-title button {
    width: 12px;
    height: 12px;
    background: #f0f0f0;
    border: 1px solid;
    border-color: #fff #696969 #696969 #fff;
}

.pane-title svg {
    display: block;
    width: 10px;
    height: 10px;
}

.box {
    background: #fff;
    border: 1px solid #c4c7dc;
}

.box h3 {
    height: 15px;
    line-height: 14px;
    padding: 0 4px;
    color: #4a5570;
    background: linear-gradient(#fafafd, #e6e8f2 50%, #cdd1e2);
    display: flex;
    align-items: center;
}

.navigator .box {
    margin: 3px 6px 4px 5px;
}

.navigator .box.grow {
    flex: 1;
    min-height: 0;
    display: flex;
    flex-direction: column;
    margin-bottom: 6px;
}

.named-views {
    display: flex;
    align-items: center;
    gap: 3px;
    padding: 6px 6px 6px 3px;
}

.select {
    flex: 1;
    position: relative;
}

.select select {
    width: 100%;
    height: 21px;
    padding-left: 3px;
    appearance: none;
    background: #e1e1e1;
    border: 1px solid #adadad;
}

.select::after {
    content: '';
    position: absolute;
    right: 6px;
    top: 5px;
    width: 6px;
    height: 6px;
    border: solid #555;
    border-width: 0 1px 1px 0;
    transform: rotate(45deg);
}

.named-views button {
    width: 22px;
    height: 22px;
    background: #e4e4e4;
    border: 1px solid #adadad;
    display: flex;
    align-items: center;
    justify-content: center;
}

.tree {
    flex: 1;
    margin: 5px;
    padding-top: 1px;
    border: 1px solid #7a7f8c;
    list-style: none;
}

.tree li {
    height: 16px;
    display: flex;
    align-items: center;
}

.tree .root {
    padding-left: 6px;
}

.tree .icon {
    width: 14px;
    height: 14px;
    margin: 0 5px 0 4px;
}

.tree .root .icon {
    margin-right: 4px;
}

.tree input {
    appearance: none;
    width: 12px;
    height: 12px;
    border: 1px solid #555;
    background: #fff;
    display: grid;
    place-items: center;
}

.tree input.part {
    background: linear-gradient(#b8b8b8, #b8b8b8) no-repeat center / 6px 6px, #fff;
}

.tree input:checked::after {
    content: '';
    width: 8px;
    height: 4px;
    border: solid #444;
    border-width: 0 0 1px 1px;
    transform: rotate(-45deg);
}

.branch {
    width: 25px;
    height: 16px;
    display: flex;
    align-items: center;
    padding-left: 9px;
    background:
        repeating-linear-gradient(#888 0 1px, transparent 1px 2px) no-repeat 13px 0 / 1px 100%,
        repeating-linear-gradient(90deg, #888 0 1px, transparent 1px 2px) no-repeat 13px 8px / 12px 1px;
}

.branch.last {
    background-size: 1px 50%, 12px 1px;
}

.branch button {
    width: 9px;
    height: 9px;
    border: 1px solid #919191;
    background:
        linear-gradient(#223f9c, #223f9c) no-repeat center / 5px 1px,
        linear-gradient(#223f9c, #223f9c) no-repeat center / 1px 5px,
        #fff;
}

/* tabs under the panes */
.tabs {
    height: 23px;
    flex: none;
    display: flex;
    align-items: flex-start;
    border-top: 1px solid #696969;
    padding-left: 4px;
    background: #f0f0f0;
    font-family: 'Open Sans', 'Noto Sans', sans-serif;
}

.tabs button {
    height: 20px;
    display: flex;
    align-items: center;
    gap: 4px;
    padding: 0 4px;
    border-bottom: 1px solid #696969;
}

.tabs .icon {
    width: 15px;
    height: 15px;
}

.tabs .current {
    height: 22px;
    margin-top: -1px;
    background: #f0f0f0;
    border-left: 1px solid #fff;
    border-bottom: 2px solid #808080;
}

.tabs .framed {
    border: 1px solid #696969;
    border-top: none;
    border-right-width: 2px;
}

/* document */
.document {
    flex: 1;
    min-width: 0;
    display: flex;
    flex-direction: column;
    padding: 0 4px 0 6px;
}

.viewport {
    flex: 1;
    min-height: 0;
    position: relative;
    background: #fff;
    border: 2px solid #7c7c7c;
    border-top-color: #696969;
    overflow: hidden;
}

.doc-tabs {
    height: 22px;
    border-top: none;
    padding-left: 0;
}

.doc-tabs .current {
    padding: 0 6px 0 3px;
    border-right: 2px solid #696969;
}

.scene {
    display: block;
    width: 100%;
    height: 100%;
}

.ground {
    fill: #ececec;
}

.ground-shade {
    fill: #000;
    fill-opacity: .03;
}

.grid-lines,
.lines-copy {
    fill: none;
    stroke: #c8c8c8;
    stroke-width: 1.3;
}

.grid-dots,
.dots-copy {
    fill: #a4a4a4;
    shape-rendering: crispEdges;
}

.grid-axis {
    fill: none;
    stroke: #74b4b4;
    stroke-width: 1.4;
}

.faded {
    opacity: .5;
}

.on-tube {
    opacity: .35;
}

.lines-copy.on-tube {
    stroke: #777;
}

.dots-copy.on-tube {
    fill: #666;
}

.lines-copy.on-cone {
    stroke: url(#gridOnCone);
    opacity: .7;
}

.dots-copy.on-cone {
    fill: #888;
    opacity: .6;
}

.cone-axes {
    opacity: .85;
}

.tube-shadow {
    fill: #000;
    fill-opacity: .1;
}

.cone {
    width: 100%;
    height: 100%;
    background: conic-gradient(from 0deg at 445px 276px,
        #a8a8a8 0deg, #a6a6a6 60deg, #a6a6a8 120deg, #b2b2b4 150deg, #bdbdbf 172deg,
        #c2c2c4 195deg, #c6c6c8 218deg, #cececf 229deg, #e2e2e4 239deg, #e6e6e8 250deg,
        #d8d8da 255deg, #cacacc 261deg, #c5c5c7 268deg, #c2c2c4 282deg, #bdbdbf 300deg,
        #b5b5b5 318deg, #acacac 335deg, #a8a8a8 360deg);
}

.edge {
    fill: none;
    stroke: #000;
    stroke-width: 1.4;
}

.rim {
    fill: url(#rim);
}

.dashes {
    fill: none;
    stroke: #f0f;
    stroke-width: 1.4;
}

.dash-long {
    stroke-dasharray: 16 7;
}

.dash-mix {
    stroke-dasharray: 14 5 3 5;
}

.dash-short {
    stroke-dasharray: 6 4;
}

.axis-label {
    font: 12px 'Open Sans', sans-serif;
    text-anchor: middle;
}

.cursor {
    position: absolute;
    left: 805px;
    top: 678px;
    width: 12px;
    height: 20px;
}

.tooltip {
    position: absolute;
    left: 805px;
    top: 696px;
    height: 20px;
    line-height: 18px;
    padding: 0 7px 0 5px;
    color: #555;
    background: #fff;
    border: 1px solid #767676;
}

/* edit bar */
.editbar {
    width: 200px;
}

.edit-boxes {
    flex: 1;
    display: flex;
    flex-direction: column;
    gap: 2px;
    padding: 4px 2px;
    background: #fff;
}

.editbar .box {
    background: #fafafd;
}

.editbar .box h3 {
    height: 17px;
    line-height: 16px;
}

.editbar .tabs {
    padding-left: 1px;
}

.fold {
    margin-left: auto;
    border: 4px solid transparent;
    border-top-color: #777c88;
    border-bottom: none;
}

.close-editor {
    height: 20px;
    display: flex;
    align-items: center;
    gap: 6px;
    padding-left: 3px;
}

.palette {
    display: flex;
    gap: 4px;
    padding: 4px 4px 0;
}

h3 + .palette {
    padding-top: 5px;
}

.palette:last-child {
    padding-bottom: 4px;
}

.palette button {
    width: 22px;
    height: 22px;
    border: 1px solid #c8ccdf;
    background: linear-gradient(#fdfdff, #d3d7e8);
}

.palette svg {
    display: block;
    width: 20px;
    height: 20px;
}

/* status bar */
.statusbar {
    height: 22px;
    flex: none;
    display: flex;
    align-items: center;
    padding-left: 3px;
    border-top: 1px solid #d7d7d7;
}

.message {
    flex: 1;
}

.cell {
    height: 19px;
    border-left: 1px solid #d7d7d7;
}

.w10 { width: 10px; }
.w59 { width: 59px; }
.w68 { width: 68px; }
.w72 { width: 72px; }
.w78 { width: 78px; }
.w92 { width: 92px; }
```
FILE: scene.js
```
const NS = 'http://www.w3.org/2000/svg';
const $ = (id) => document.getElementById(id);

function add(parent, name, attrs, text) {
    const el = document.createElementNS(NS, name);
    for (const key in attrs) el.setAttribute(key, attrs[key]);
    if (text) el.textContent = text;
    parent.appendChild(el);
    return el;
}

// work plane -> screen
function project(u, v) {
    const w = 1.09615 + 0.05558 * u + 0.04057 * v;
    return [(985.3 + 169.2 * u - 114.8 * v) / w, (656.4 - 21.78 * u - 16.4 * v) / w];
}

const at = (u, v) => project(u, v).map((n) => n.toFixed(1)).join(' ');

// work plane grid, -5..5 in both directions, ten snap points per cell
let lines = '';
for (let i = -5; i <= 5; i++) {
    if (i === 0) continue;
    lines += `M${at(i, -5)}L${at(i, 5)}M${at(-5, i)}L${at(5, i)}`;
}

let dots = '';
for (let i = -50; i <= 50; i++) {
    for (let j = -50; j <= 50; j++) {
        const [x, y] = project(i / 10, j / 10).map(Math.round);
        dots += `M${x} ${y}h1v1h-1z`;
    }
}

const groundPath = `M${at(-5, -5)}L${at(5, -5)}L${at(5, 5)}L${at(-5, 5)}z`;
const axesPath = `M${at(-5, 0)}L${at(5, 0)}M${at(0, -5)}L${at(0, 5)}`;

$('ground').setAttribute('d', groundPath);
$('gridLines').setAttribute('d', lines);
$('gridDots').setAttribute('d', dots);
document.querySelectorAll('.ground-shade').forEach((p) => p.setAttribute('d', groundPath));
document.querySelectorAll('.lines-copy').forEach((p) => p.setAttribute('d', lines));
document.querySelectorAll('.dots-copy').forEach((p) => p.setAttribute('d', dots));
document.querySelectorAll('.axes').forEach((p) => p.setAttribute('d', axesPath));

// smooth curve through points
function curve(pts) {
    let d = `M${pts[0][0]} ${pts[0][1]}`;
    for (let i = 0; i < pts.length - 1; i++) {
        const p0 = pts[i - 1] || pts[i];
        const p1 = pts[i];
        const p2 = pts[i + 1];
        const p3 = pts[i + 2] || p2;
        d += `C${p1[0] + (p2[0] - p0[0]) / 6} ${p1[1] + (p2[1] - p0[1]) / 6} ` +
            `${p2[0] - (p3[0] - p1[0]) / 6} ${p2[1] - (p3[1] - p1[1]) / 6} ${p2[0]} ${p2[1]}`;
    }
    return d;
}

// tube: two cubic segments along each silhouette
const leftSide = [[1169, 156], [1161, 225], [1137, 292], [1107, 353], [1070, 425], [1020, 488], [960, 515]];
const rightSide = [[1263, 158], [1256, 222], [1241, 282], [1217, 336], [1178, 430], [1112, 543], [990, 614]];

const mix = (a, b, t) => a + (b - a) * t;
const side = (t) => leftSide.map((p, i) => [mix(p[0], rightSide[i][0], t), mix(p[1], rightSide[i][1], t)]);

function band(a, b) {
    const back = [...b].reverse();
    return `M${a[0]}C${a.slice(1).join(' ')}L${back[0]}C${back.slice(1).join(' ')}z`;
}

function shade(table, t) {
    for (let i = 1; i < table.length; i++) {
        if (t <= table[i][0]) {
            const [t0, c0] = table[i - 1];
            const [t1, c1] = table[i];
            const c = Math.round(mix(c0, c1, (t - t0) / (t1 - t0)));
            return `rgb(${c},${c},${c + 1})`;
        }
    }
}

const topShade = [[0, 142], [0.1, 156], [0.3, 168], [0.42, 184], [0.5, 218], [0.6, 186], [0.8, 160], [1, 128]];
const midShade = [[0, 136], [0.2, 160], [0.45, 178], [0.6, 172], [0.8, 158], [1, 130]];
const lowShade = [[0, 122], [0.3, 154], [0.6, 162], [0.85, 146], [1, 124]];
const endShade = [[0, 104], [0.3, 136], [0.6, 150], [0.85, 140], [1, 116]];

$('tubeShape').setAttribute('d', band(leftSide, rightSide));

const strips = 40;
for (let k = 0; k < strips; k++) {
    const t = (k + 0.5) / strips;
    const grad = add($('tube'), 'linearGradient', {
        id: 'strip' + k, gradientUnits: 'userSpaceOnUse', x1: 1216, y1: 160, x2: 1010, y2: 560
    });
    [[0, topShade], [0.15, topShade], [0.4, midShade], [0.7, lowShade], [1, endShade]].forEach(([offset, table]) => {
        add(grad, 'stop', { offset, 'stop-color': shade(table, t) });
    });
    add($('tube'), 'path', {
        d: band(side(k / strips), side(Math.min(1, (k + 1.4) / strips))),
        fill: `url(#strip${k})`
    });
}

// selection outline of the rotary surface
const outer = [[701, 303], [677, 310], [651, 322], [625, 341], [598, 368], [581, 394], [562, 435], [548, 487],
    [543, 540], [545, 587], [551, 633], [566, 692], [588, 745], [621, 803], [668, 863], [718, 911], [771, 945],
    [829, 968], [887, 975], [936, 968], [982, 946], [1020, 914], [1052, 868], [1074, 812], [1083, 760],
    [1086, 713], [1081, 653], [1068, 603], [1046, 540], [1011, 470], [969, 418], [929, 379], [900, 355], [875, 338]];
const inner = [[980, 515], [988, 522], [1006, 547], [1015, 577], [1013, 602], [1001, 621], [976, 631],
    [949, 623], [925, 598], [913, 567], [913, 545], [920, 524], [931, 511], [943, 507]];

add($('dashes'), 'path', { class: 'dash-long', d: curve(outer.slice(0, 14)) });
add($('dashes'), 'path', { class: 'dash-mix', d: curve(outer.slice(13, 24)) });
add($('dashes'), 'path', { class: 'dash-long', d: curve(outer.slice(23)) });
add($('dashes'), 'path', { class: 'dash-long', d: 'M875 338L980 515M943 503L701 303' });
add($('dashes'), 'path', { class: 'dash-short', d: curve(inner) });

// nodes
[[773, 290], [972, 517], [1116, 377], [1190, 165], [1240, 150], [1256, 163]].forEach(([x, y]) => {
    add($('nodes'), 'rect', { x: x - 2, y: y - 2, width: 4, height: 4, fill: '#f00' });
});
[[1013, 576], [972, 613], [1090, 741], [794, 979]].forEach(([x, y]) => {
    add($('nodes'), 'rect', { x: x - 2, y: y - 2, width: 4, height: 4, fill: '#800080' });
});

// coordinate systems
function arrow(x0, y0, x1, y1, color, head, name, lx, ly) {
    const len = Math.hypot(x1 - x0, y1 - y0);
    const dx = (x1 - x0) / len;
    const dy = (y1 - y0) / len;
    const bx = x1 - dx * 12;
    const by = y1 - dy * 12;
    add($('triads'), 'path', { d: `M${x0} ${y0}L${bx} ${by}`, stroke: color, 'stroke-width': 2.5 });
    add($('triads'), 'path', { d: `M${x1} ${y1}L${bx - dy * 4} ${by + dx * 4}L${bx + dy * 4} ${by - dx * 4}z`, fill: head });
    add($('triads'), 'text', { class: 'axis-label', x: lx, y: ly, fill: color }, name);
}

arrow(898, 599, 922, 588, '#f00', '#800000', 'X', 927, 589);
arrow(898, 599, 868, 591, '#0f0', '#008000', 'Y', 860, 593);
arrow(898, 599, 898, 562, '#00f', '#000090', 'Z', 897, 558);

arrow(303, 1038, 334, 1022, '#f00', '#800000', 'X', 339, 1022);
arrow(303, 1038, 277, 1026, '#0f0', '#008000', 'Y', 271, 1028);
arrow(303, 1038, 300, 1003, '#00f', '#000090', 'Z', 297, 1000);
```
